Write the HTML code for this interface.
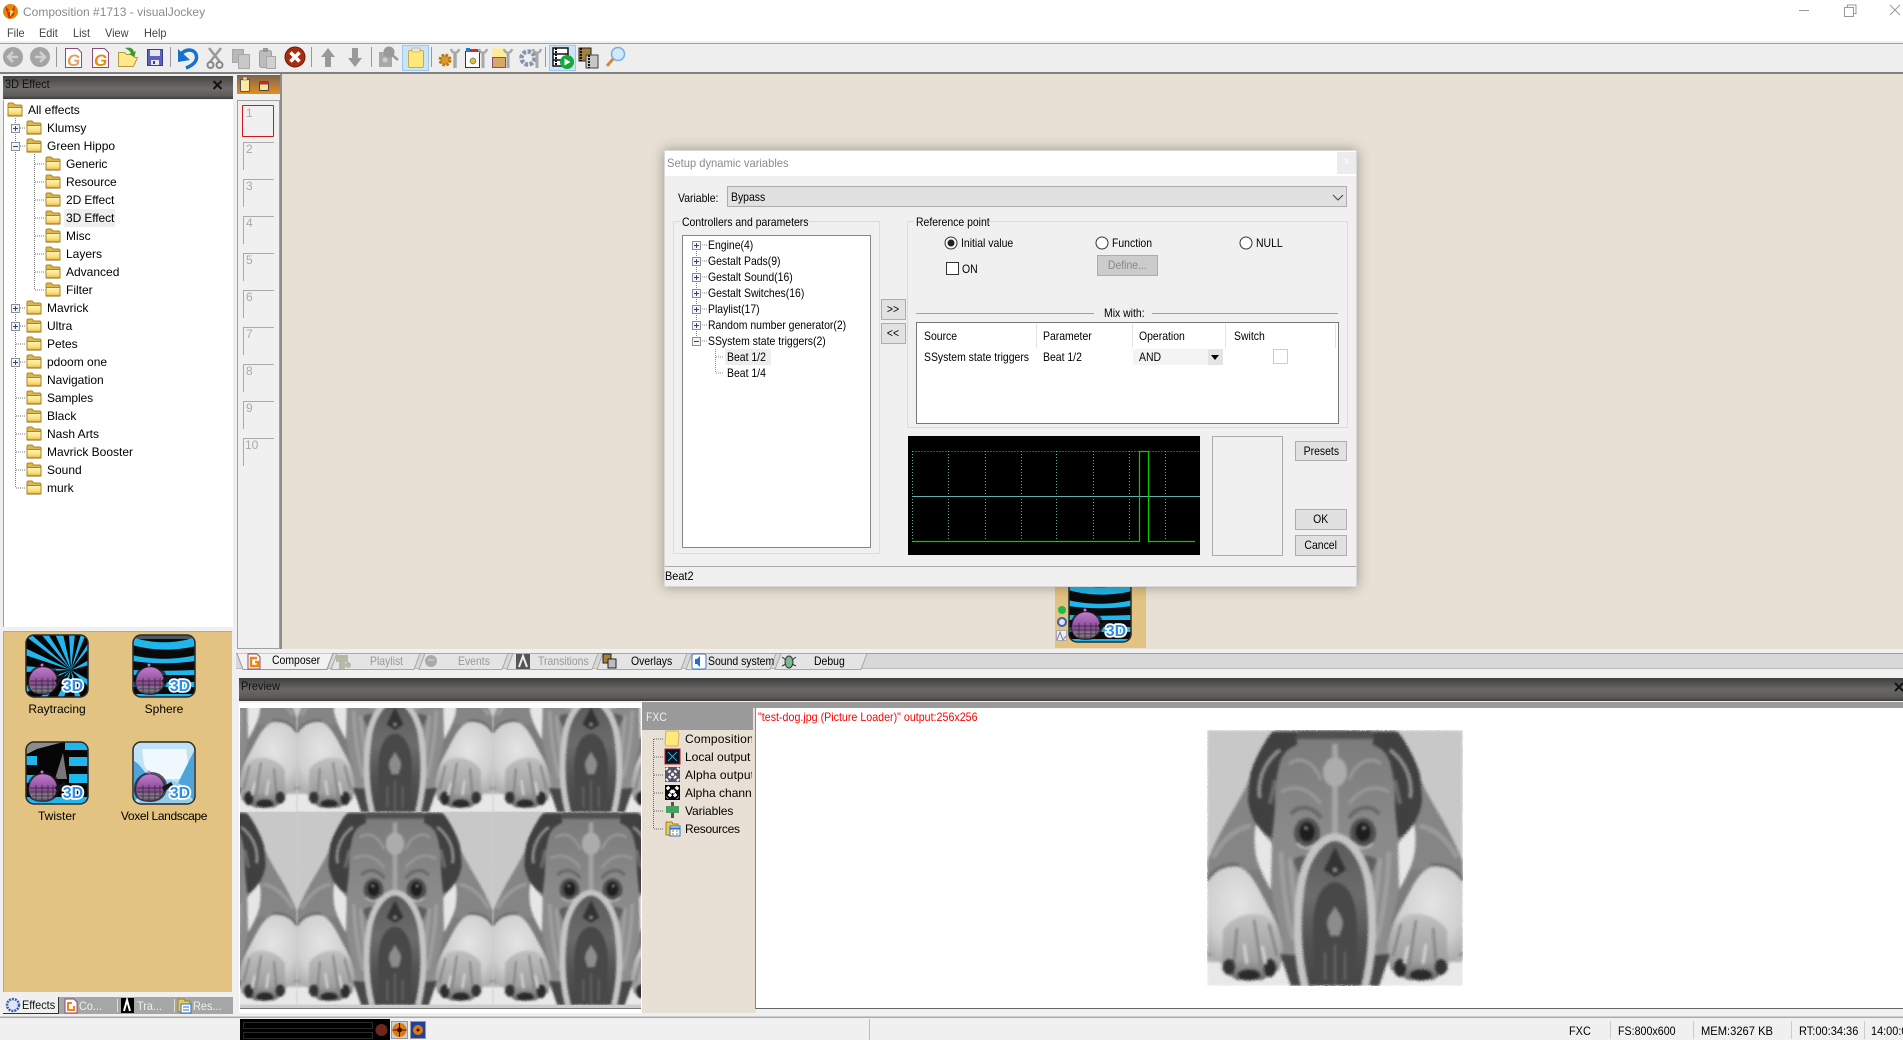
<!DOCTYPE html>
<html><head><meta charset="utf-8"><title>Composition #1713 - visualJockey</title>
<style>
html,body{margin:0;padding:0;background:#f0f0f0;width:1903px;height:1040px;overflow:hidden}
#p{position:relative;width:1903px;height:1040px;overflow:hidden;font:12px/16px "Liberation Sans",sans-serif;color:#000}
.a,.t,svg.a{position:absolute}
.t{white-space:nowrap;font:12px/16px "Liberation Sans",sans-serif}
.g{color:#8a8a8a}
.n{transform:scaleX(.87);transform-origin:0 50%}
.s{transform:scaleX(.91);transform-origin:0 50%}
.btn{position:absolute;background:#e1e1e1;border:1px solid #adadad;box-sizing:border-box;text-align:center;line-height:18px;font-size:12px}
.btn span{display:inline-block;transform:scaleX(.87)}
</style></head><body><div id="p">
<svg width="0" height="0" style="position:absolute"><defs>
<linearGradient id="fg" x1="0" y1="0" x2="0" y2="1"><stop offset="0" stop-color="#fff6bc"/><stop offset=".6" stop-color="#fbdf7e"/><stop offset="1" stop-color="#e8b840"/></linearGradient>
<symbol id="fo" viewBox="0 0 16 15"><path d="M1 13.500V2.500Q1 1 2.500 1h3.500l2 2h5.500Q15 3 15 4.500v9z" fill="#e0b848" stroke="#a8852a"/><path d="M1 14V5.500h14V14z" fill="url(#fg)" stroke="#a8852a"/><path d="M1.500 14h13" stroke="#8a6a18"/></symbol>
<symbol id="pl" viewBox="0 0 9 9"><rect x=".5" y=".5" width="8" height="8" fill="#f4f4f4" stroke="#8a9098"/><path d="M2 4.500h5M4.500 2v5" stroke="#234a8a"/></symbol>
<symbol id="mi" viewBox="0 0 9 9"><rect x=".5" y=".5" width="8" height="8" fill="#f4f4f4" stroke="#8a9098"/><path d="M2 4.500h5" stroke="#234a8a"/></symbol>
<clipPath id="ic"><rect x="1" y="1" width="62" height="62" rx="8"/></clipPath>
<linearGradient id="hg" x1="0" y1="0" x2="0" y2="1"><stop offset="0" stop-color="#c07ccc"/><stop offset=".6" stop-color="#8a4a96"/><stop offset=".85" stop-color="#8d7f92"/><stop offset="1" stop-color="#444"/></linearGradient>
<g id="hb"><path d="M2 50C1 38 10 31 19 31s16 6 16 15c0 9-7 15-16 15S3 59 2 50z" fill="#111" opacity=".7"/><path d="M4 50C3 40 10 33 18 33s14 6 14 14-6 13-14 13S5 58 4 50z" fill="url(#hg)" stroke="#3a2040" stroke-width=".6"/><path d="M5 47h27M5 51h26M7 55h22M11 44v15M17 44v16M23 44v15M28 44v13" stroke="#2a2a2a" stroke-width=".7" fill="none"/><path d="M30 46l9-5 2 3-9 7z" fill="#161616"/><circle cx="17" cy="31" r="1.500" fill="#d070e0"/><text x="48" y="57" text-anchor="middle" font-family="Liberation Sans" font-weight="bold" font-size="16" fill="#2b8fe6" stroke="#fff" stroke-width="3.500" paint-order="stroke" stroke-linejoin="round">3D</text><rect x="1" y="1" width="62" height="62" rx="8" fill="none" stroke="#2a2a2a" stroke-width="1.500"/></g>
<symbol id="ray" viewBox="0 0 64 64"><g clip-path="url(#ic)"><rect width="64" height="64" fill="#050505"/><path d="M46 36L0 2h8zM46 36L16 0h7zM46 36L30 0h8zM46 36L44 0h6zM46 36L56 0h5zM46 36L64 8v6zM46 36L64 26v5zM46 36L0 14v7zM46 36L0 32v6zM46 36L64 46v7zM46 36L50 64h6zM46 36L32 64h7zM46 36L14 64h7zM46 36L0 52v7z" fill="#22b6ec"/></g><use href="#hb"/></symbol>
<symbol id="sph" viewBox="0 0 64 64"><g clip-path="url(#ic)"><rect width="64" height="64" fill="#0a0a0a"/><path d="M0 3C20 10 44 10 64 3v9C44 17 20 17 0 11zM0 21C20 26 44 26 64 21v6C44 30 20 30 0 27zM0 36C20 37 44 37 64 36v5H0zM0 48h64v5H0zM0 60h64v4H0z" fill="#1fb6ec"/><rect x="0" y="0" width="64" height="5" fill="#8ab" opacity=".5"/></g><use href="#hb"/></symbol>
<symbol id="twi" viewBox="0 0 64 64"><g clip-path="url(#ic)"><rect width="64" height="64" fill="#060606"/><path d="M40 0h24v9H40zM44 16h20v9H44zM44 33h20v9H44zM0 15h12v9H0zM0 34h12v8H0z" fill="#1fb6ec"/><path d="M0 0h42L12 8 0 14z" fill="#8c8c8c"/><path d="M38 12l4 26H30z" fill="#777"/><path d="M0 56h64v8H0z" fill="#1fb6ec"/></g><use href="#hb"/></symbol>
<symbol id="vox" viewBox="0 0 64 64"><g clip-path="url(#ic)"><rect width="64" height="64" fill="#bfe2f5"/><path d="M10 8h44l2 14-8 16H20L12 24z" fill="#eef8fd"/><path d="M2 20c8 4 14 18 22 24L2 60zM62 10L46 42l16 18z" fill="#4ea4d8"/><path d="M22 44c8-6 18-6 28 0l12 20H4z" fill="#93cdec"/></g><use href="#hb"/></symbol>
<radialGradient id="arm" cx=".42" cy=".38" r=".75"><stop offset="0" stop-color="#e4e4e4"/><stop offset=".55" stop-color="#d0d0d0"/><stop offset="1" stop-color="#9a9a9a"/></radialGradient>
<linearGradient id="fc" x1="0" y1="0" x2="0" y2="1"><stop offset="0" stop-color="#7a7a7a"/><stop offset=".4" stop-color="#8a8a8a"/><stop offset="1" stop-color="#8e8e8e"/></linearGradient>
<linearGradient id="pw" x1="0" y1="0" x2="0" y2="1"><stop offset="0" stop-color="#c0c0c0"/><stop offset=".7" stop-color="#a0a0a0"/><stop offset="1" stop-color="#666"/></linearGradient>
<linearGradient id="mz" x1="0" y1="0" x2="0" y2="1"><stop offset="0" stop-color="#5a5a5a"/><stop offset=".4" stop-color="#6c6c6c"/><stop offset=".7" stop-color="#525252"/><stop offset="1" stop-color="#454545"/></linearGradient>
<filter id="fur" x="0" y="0" width="1" height="1" color-interpolation-filters="sRGB"><feGaussianBlur in="SourceGraphic" stdDeviation="1.300" result="b"/><feTurbulence type="fractalNoise" baseFrequency=".9" numOctaves="2" seed="4" result="n"/><feDisplacementMap in="b" in2="n" scale="3" xChannelSelector="R" yChannelSelector="G"/></filter>
<g id="dh">
<path d="M0 132C5 120 14 100 24 84 32 70 38 60 42 50L48 92 62 110 64 140 40 140 14 138 0 152z" fill="#858585"/>
<path d="M6 128C14 112 28 98 44 96" stroke="#9a9a9a" stroke-width="5" fill="none"/>
<path d="M0 152C6 142 14 136 28 136 44 138 52 160 62 178 70 192 76 206 76 226L73 232 16 235 0 222z" fill="url(#arm)"/>
<path d="M0 150C8 138 18 134 32 135" stroke="#666" stroke-width="3" fill="none"/>
<path d="M49 94C56 104 62 108 65 114L64 160C58 150 52 138 49 126 47 114 47 102 49 94z" fill="#e6e6e6"/>
<path d="M16 200C24 188 42 180 58 186 68 194 76 210 76 226L72 240 55 250 30 250 15 240z" fill="url(#pw)"/>
<path d="M30 198L27 232M47 190L54 236M62 194L70 226" stroke="#7a7a7a" stroke-width="2" fill="none"/>
<ellipse cx="22" cy="237" rx="6" ry="8" fill="#333"/><ellipse cx="42" cy="245" rx="11" ry="5.500" fill="#2a2a2a"/><ellipse cx="63" cy="238" rx="6" ry="9" fill="#2c2c2c"/>
<path d="M37 214l3 20M55 216l4 18" stroke="#d4d4d4" stroke-width="3"/>
<path d="M128 0H70C68 30 66 60 66 80L65 110V165C68 180 72 192 75 205L76 232 84 256H128z" fill="url(#fc)"/>
<path d="M65 2H90V15C80 18 74 26 72 36 69 48 68 60 68 72 68 84 66 96 65 108L58 104 48 92C44 84 41 76 41 68L43 45C47 30 56 14 65 2z" fill="#404040"/>
<path d="M73 20C62 28 55 40 53 52 52 58 52 64 53 68" stroke="#8c8c8c" stroke-width="4" fill="none"/><path d="M68 50L63 74" stroke="#6c6c6c" stroke-width="4"/>
<path d="M92 0h36v9H88z" fill="#505050"/>
<path d="M82 34C92 26 106 30 114 50M74 62C88 54 102 58 114 74" stroke="#9a9a9a" stroke-width="3" fill="none"/>
<path d="M84 84C92 74 106 76 114 88" stroke="#686868" stroke-width="4" fill="none"/>
<ellipse cx="100" cy="103" rx="13" ry="15" fill="#505050"/><ellipse cx="100" cy="102" rx="7.500" ry="9.500" fill="#1e1e1e"/><circle cx="99" cy="98" r="1.800" fill="#999"/>
<path d="M90 113Q100 123 110 112" stroke="#c4c4c4" stroke-width="2.200" fill="none"/>
<path d="M74 122C75 150 79 180 86 210M83 128C85 150 87 170 90 192" stroke="#9e9e9e" stroke-width="5" fill="none"/>
<path d="M104 128C100 132 96 140 94 150L86 130C90 126 98 124 104 128z" fill="#5e5e5e"/>
<path d="M73 224L98 226 104 256H84z" fill="#484848"/>
</g>
<g id="dog" filter="url(#fur)">
<rect width="256" height="256" fill="#c8c8c8"/>
<rect y="226" width="256" height="6" fill="#b2b2b2"/><rect y="232" width="256" height="24" fill="#e8e8e8"/>
<path d="M0 132C14 104 32 76 42 50L60 8 68 0H188L196 8 214 50C224 76 242 104 256 132V226H0z" fill="#7c7c7c"/>
<use href="#dh"/><use href="#dh" transform="translate(256 0) scale(-1 1)"/>
<path d="M128 14V105" stroke="#a4a4a4" stroke-width="6"/><ellipse cx="128" cy="42" rx="12" ry="15" fill="#acacac"/>
<path d="M128 107C110 108 96 130 92 155 87 190 88 225 96 256H160C168 225 169 190 164 155 160 130 146 108 128 107z" fill="url(#mz)"/>
<path d="M128 107C112 108 98 130 94 155 89 190 90 225 98 256M128 107C144 108 158 130 162 155 167 190 166 225 158 256" stroke="#c4c4c4" stroke-width="8" fill="none"/>
<path d="M128 152C110 154 106 180 106 200L108 256H148L150 200C150 180 146 154 128 152z" fill="#484848"/>
<path d="M128 117L117 140 128 147 139 140z" fill="#333"/><circle cx="128" cy="140" r="2.500" fill="#8a8a8a"/>
<path d="M128 176C131 182 136 187 136 193 136 198 133 201 133 206H123C123 201 120 198 120 193 120 187 125 182 128 176z" fill="#8c8c8c"/>
<path d="M118 222V250M128 214V254M138 222V250" stroke="#6a6a6a" stroke-width="2"/>
</g>
</defs></svg>

<!-- title bar -->
<div class="a" style="left:0;top:0;width:1903px;height:42px;background:#fff"></div>
<svg class="a" style="left:2px;top:3px" width="17" height="17" viewBox="0 0 17 17"><circle cx="8.500" cy="8.500" r="7.500" fill="#e8860c"/><path d="M3 3l4 4-2 3 5-3 3-5-1 10-5 4z" fill="#d82a10"/><path d="M8 7l4 1-4 6z" fill="#ffe14a"/></svg>
<div class="t g" style="left:23px;top:4px">Composition #1713 - visualJockey</div>
<div class="t s" style="left:7px;top:25px;color:#444">File</div><div class="t s" style="left:39px;top:25px;color:#444">Edit</div><div class="t s" style="left:73px;top:25px;color:#444">List</div><div class="t s" style="left:105px;top:25px;color:#444">View</div><div class="t s" style="left:144px;top:25px;color:#444">Help</div>
<svg class="a" style="left:1790px;top:0" width="113" height="20"><path d="M9 10.500h10" stroke="#999"/><path d="M54.500 7.500h9v9h-9zM57.500 7.500v-2.500h8.500v8.500h-2.500" fill="none" stroke="#999"/><path d="M100 5l10 10M110 5l-10 10" stroke="#999"/></svg>

<!-- toolbar -->
<div class="a" style="left:0;top:41px;width:1903px;height:2px;background:#f0f0f0"></div>
<div class="a" style="left:0;top:43px;width:1903px;height:1px;background:#a0a0a0"></div>
<div class="a" style="left:0;top:44px;width:1903px;height:28px;background:#eee"></div>
<div class="a" style="left:0;top:72px;width:1903px;height:2px;background:#808080"></div>
<svg class="a" style="left:0;top:0" width="640" height="76">
<path d="M56.500 47v20M170.500 47v20M311.500 47v20M371.500 47v20M431.500 47v20M545.500 47v20" stroke="#999"/>
<rect x="402.500" y="45.500" width="26" height="25" fill="#cce4f7" stroke="#99c9ef"/><rect x="549.500" y="45.500" width="26" height="25" fill="#cce4f7" stroke="#99c9ef"/>
<circle cx="13" cy="57" r="10" fill="#a4a4a4"/><path d="M18 57H9M13 52l-5 5 5 5" stroke="#d0d0d0" stroke-width="2.500" fill="none"/>
<circle cx="40" cy="57" r="10" fill="#a4a4a4"/><path d="M35 57h9M40 52l5 5-5 5" stroke="#d0d0d0" stroke-width="2.500" fill="none"/>
<path d="M65.500 48.500h12l4 4v15h-16z" fill="#fff" stroke="#8a4a7a"/><text x="67" y="66" font-family="Liberation Sans" font-weight="bold" font-style="italic" font-size="17" fill="#e0a060">G</text>
<path d="M92.500 48.500h12l4 4v15h-16z" fill="#fff" stroke="#8a4a7a"/><text x="94" y="66" font-family="Liberation Sans" font-weight="bold" font-style="italic" font-size="17" fill="#f0860c">G</text>
<path d="M118.500 66.500V52.500h6l2 2h8v3h3l-4 9z" fill="#ffe98c" stroke="#b89a38"/><path d="M125 48c5-1 8 0 9 4l2-1-2 6-5-3 2-1c-1-2-3-3-6-5z" fill="#3a9a30"/>
<rect x="147.500" y="49.500" width="15" height="16" fill="#5a62c0" stroke="#3a3f90"/><rect x="150" y="50" width="10" height="6" fill="#e6e6f2"/><rect x="151" y="60" width="8" height="5" fill="#e8e8e8"/><rect x="153" y="61" width="2" height="3" fill="#3a3f90"/>
<path d="M181 54C188 47 197 50 196.500 58 196 63 191 66 186 68" stroke="#1570d0" stroke-width="3.500" fill="none"/><path d="M178 49v13l12-2z" fill="#1570d0"/>
<path d="M209 48l11 14M221 48l-11 14" stroke="#999" stroke-width="2.500"/><circle cx="210.500" cy="65" r="3" fill="none" stroke="#888" stroke-width="2"/><circle cx="219.500" cy="65" r="3" fill="none" stroke="#888" stroke-width="2"/>
<rect x="232.500" y="49.500" width="11" height="13" fill="#b8b8b8" stroke="#a8a8a8"/><rect x="238.500" y="54.500" width="11" height="14" fill="#c8c8c8" stroke="#a8a8a8"/>
<rect x="259.500" y="50.500" width="12" height="17" rx="2" fill="#bcbcbc" stroke="#a0a0a0"/><rect x="263" y="48" width="5" height="4" fill="#999"/><rect x="266.500" y="56.500" width="9" height="12" fill="#d0d0d0" stroke="#a8a8a8"/>
<circle cx="295" cy="57" r="10" fill="#a82c12" stroke="#6e1a08"/><path d="M290.500 52.500l9 9M299.500 52.500l-9 9" stroke="#fff" stroke-width="3.500"/>
<path d="M328 48l-7 9h4v10h6V57h4z" fill="#999"/><path d="M355 67l-7-9h4V48h6v10h4z" fill="#999"/>
<rect x="379" y="52" width="13" height="15" fill="#a8a8a8"/><circle cx="389" cy="52" r="5.500" fill="#999"/><path d="M391 54l7 6" stroke="#999" stroke-width="2.500"/><circle cx="385" cy="60" r="2.500" fill="#ccc"/>
<rect x="408.500" y="50.500" width="15" height="17" rx="1.500" fill="#ffe97a" stroke="#c9a94f"/><rect x="412" y="48" width="8" height="4" fill="#e8e8e0" stroke="#a89860" stroke-width=".5"/>
<circle cx="445" cy="60" r="5" fill="#d89a30" stroke="#b87818" stroke-width="3" stroke-dasharray="2.500 1.500"/><path d="M455 52v16" stroke="#a8a8a8" stroke-width="3.500"/><path d="M451 49c1 5 7 5 8 0" stroke="#a8a8a8" stroke-width="2.500" fill="none"/>
<rect x="465.500" y="51.500" width="14" height="16" fill="#fff" stroke="#333"/><rect x="466" y="48" width="4" height="4" fill="#1080e0"/><rect x="470" y="49" width="8" height="3" fill="#d82a20"/><circle cx="473" cy="61" r="3" fill="#e0c040" stroke="#333" stroke-width=".5"/><path d="M483 52v16" stroke="#a8a8a8" stroke-width="3"/><path d="M479 49c1 5 7 5 8 0" stroke="#a8a8a8" stroke-width="2.500" fill="none"/>
<rect x="492.500" y="48.500" width="13" height="10" fill="#ffeb90"/><rect x="492.500" y="57.500" width="13" height="10" fill="#d8a868" stroke="#8a4a7a"/><path d="M508 52v16" stroke="#a8a8a8" stroke-width="3"/><path d="M504 49c1 5 7 5 8 0" stroke="#a8a8a8" stroke-width="2.500" fill="none"/>
<circle cx="528" cy="58" r="6.500" fill="none" stroke="#8a94b0" stroke-width="4.500" stroke-dasharray="3.500 1.500"/><path d="M537 52v16" stroke="#a8a8a8" stroke-width="3"/><path d="M533 49c1 5 7 5 8 0" stroke="#a8a8a8" stroke-width="2.500" fill="none"/>
<rect x="553" y="48" width="15" height="18" fill="#fff" stroke="#111" stroke-width="1.500"/><path d="M553 54h15M553 60h15" stroke="#111" stroke-width="1.500"/><path d="M556 48v18" stroke="#111" stroke-width="2" stroke-dasharray="2 1"/><circle cx="567" cy="62" r="7" fill="#17a838"/><path d="M564.500 58.500v7l6-3.500z" fill="#fff"/>
<rect x="579" y="48" width="12" height="13" fill="#a8803c" stroke="#222"/><rect x="586" y="55" width="12" height="13" fill="#c4c8c8" stroke="#444"/><path d="M581 48v13M589 55v13" stroke="#111" stroke-dasharray="2 1" stroke-width="2"/>
<circle cx="618" cy="54" r="6.500" fill="#cfe8fa" stroke="#7aaed8" stroke-width="1.500"/><path d="M613 59l-6 7" stroke="#d08a40" stroke-width="3"/>
</svg>

<!-- main background -->
<div class="a" style="left:282px;top:74px;width:1621px;height:575px;background:#e8e0d4"></div>

<!-- left panel -->
<div class="a" style="left:3px;top:76px;width:230px;height:23px;background:linear-gradient(#464442,#6e6c68 55%,#5e5c59 85%,#403e3c)"></div>
<div class="t s" style="left:5px;top:76px;color:#111">3D Effect</div>
<svg class="a" style="left:212px;top:80px" width="11" height="10"><path d="M1.500 1l8 8M9.500 1l-8 8" stroke="#111" stroke-width="2"/></svg>
<div class="a" style="left:3px;top:100px;width:230px;height:527px;background:#fff;border-left:1px solid #a0a0a0;box-sizing:border-box"></div>
<div class="a" style="left:64px;top:209px;width:51px;height:18px;background:#eee"></div>
<svg class="a" style="left:0;top:100px" width="233" height="410">
<path d="M15.500 18V388M34.500 54V190M35 64h10M35 82h10M35 100h10M35 118h10M35 136h10M35 154h10M35 172h10M35 190h10M16 244h10M16 298h10M16 316h10M16 334h10M16 352h10M16 370h10M16 388h10" stroke="#777" fill="none" stroke-dasharray="1 1"/>
<path d="M20 28h6M20 46h6M20 208h6M20 226h6M20 262h6" stroke="#777" stroke-dasharray="1 1"/>
<use href="#fo" x="7" y="2" width="16" height="15"/>
<use href="#fo" x="26" y="20" width="16" height="15"/><use href="#fo" x="26" y="38" width="16" height="15"/>
<use href="#fo" x="45" y="56" width="16" height="15"/><use href="#fo" x="45" y="74" width="16" height="15"/><use href="#fo" x="45" y="92" width="16" height="15"/><use href="#fo" x="45" y="110" width="16" height="15"/><use href="#fo" x="45" y="128" width="16" height="15"/><use href="#fo" x="45" y="146" width="16" height="15"/><use href="#fo" x="45" y="164" width="16" height="15"/><use href="#fo" x="45" y="182" width="16" height="15"/>
<use href="#fo" x="26" y="200" width="16" height="15"/><use href="#fo" x="26" y="218" width="16" height="15"/><use href="#fo" x="26" y="236" width="16" height="15"/><use href="#fo" x="26" y="254" width="16" height="15"/><use href="#fo" x="26" y="272" width="16" height="15"/><use href="#fo" x="26" y="290" width="16" height="15"/><use href="#fo" x="26" y="308" width="16" height="15"/><use href="#fo" x="26" y="326" width="16" height="15"/><use href="#fo" x="26" y="344" width="16" height="15"/><use href="#fo" x="26" y="362" width="16" height="15"/><use href="#fo" x="26" y="380" width="16" height="15"/>
<use href="#pl" x="11" y="24" width="9" height="9"/><use href="#mi" x="11" y="42" width="9" height="9"/><use href="#pl" x="11" y="204" width="9" height="9"/><use href="#pl" x="11" y="222" width="9" height="9"/><use href="#pl" x="11" y="258" width="9" height="9"/>
</svg>
<div class="t" style="left:28px;top:102px">All effects</div>
<div class="t" style="left:47px;top:120px">Klumsy</div>
<div class="t" style="left:47px;top:138px">Green Hippo</div>
<div class="t" style="left:66px;top:156px;letter-spacing:-.1px">Generic</div>
<div class="t" style="left:66px;top:174px;letter-spacing:-.1px">Resource</div>
<div class="t" style="left:66px;top:192px;letter-spacing:-.1px">2D Effect</div>
<div class="t" style="left:66px;top:210px;letter-spacing:-.1px">3D Effect</div>
<div class="t" style="left:66px;top:228px">Misc</div>
<div class="t" style="left:66px;top:246px">Layers</div>
<div class="t" style="left:66px;top:264px">Advanced</div>
<div class="t" style="left:66px;top:282px">Filter</div>
<div class="t" style="left:47px;top:300px">Mavrick</div>
<div class="t" style="left:47px;top:318px">Ultra</div>
<div class="t" style="left:47px;top:336px">Petes</div>
<div class="t" style="left:47px;top:354px">pdoom one</div>
<div class="t" style="left:47px;top:372px">Navigation</div>
<div class="t" style="left:47px;top:390px;letter-spacing:-.1px">Samples</div>
<div class="t" style="left:47px;top:408px">Black</div>
<div class="t" style="left:47px;top:426px">Nash Arts</div>
<div class="t" style="left:47px;top:444px">Mavrick Booster</div>
<div class="t" style="left:47px;top:462px">Sound</div>
<div class="t" style="left:47px;top:480px">murk</div>

<!-- gold panel -->
<div class="a" style="left:3px;top:631px;width:229px;height:361px;background:#e2c382;border:1px solid #aaa;border-width:1px 0 0 1px;box-sizing:border-box"></div>
<svg class="a" style="left:25px;top:634px" width="64" height="64"><use href="#ray" width="64" height="64"/></svg>
<svg class="a" style="left:132px;top:634px" width="64" height="64"><use href="#sph" width="64" height="64"/></svg>
<svg class="a" style="left:25px;top:741px" width="64" height="64"><use href="#twi" width="64" height="64"/></svg>
<svg class="a" style="left:132px;top:741px" width="64" height="64"><use href="#vox" width="64" height="64"/></svg>
<div class="t" style="left:0;width:114px;text-align:center;top:701px">Raytracing</div>
<div class="t" style="left:107px;width:114px;text-align:center;top:701px">Sphere</div>
<div class="t" style="left:0;width:114px;text-align:center;top:808px">Twister</div>
<div class="t" style="left:107px;width:114px;text-align:center;top:808px;letter-spacing:-.35px">Voxel Landscape</div>
<!-- left bottom tabs -->
<div class="a" style="left:3px;top:997px;width:230px;height:17px;background:#a6a6a6"></div>
<div class="a" style="left:3px;top:997px;width:56px;height:17px;background:#f0f0f0;border-right:1px solid #333;border-bottom:1px solid #333;box-sizing:border-box"></div>
<svg class="a" style="left:0;top:996px" width="236" height="18">
<circle cx="13" cy="9" r="6" fill="#dfe6f8" stroke="#3f5db0" stroke-width="2.500" stroke-dasharray="2 1"/>
<path d="M65 3h9l3 3v11H65z" fill="#fff" stroke="#8a4a7a"/><path d="M72 7h-4v7h6v-4" stroke="#f0860c" stroke-width="2" fill="none"/>
<path d="M117.500 3v13M174.500 3v13" stroke="#ddd"/><rect x="121" y="2" width="13" height="15" fill="#000"/><path d="M124 15l3-11 3 11" stroke="#fff" stroke-width="2" fill="none"/>
<path d="M178 3h6l1 2h5v11h-12z" fill="#e8c860" stroke="#a08020"/><rect x="181" y="8" width="10" height="9" fill="#fff" stroke="#2a70c0"/><path d="M183 11h6M183 14h6" stroke="#2a70c0"/>
</svg>
<div class="t s" style="left:22px;top:997px;color:#111">Effects</div>
<div class="t s" style="left:79px;top:998px;color:#eee">Co...</div>
<div class="t s" style="left:137px;top:998px;color:#eee">Tra...</div>
<div class="t s" style="left:193px;top:998px;color:#eee">Res...</div>

<!-- column 2 -->
<div class="a" style="left:237px;top:75px;width:43px;height:19px;background:linear-gradient(#806248,#a87840 45%,#e88c18)"></div>
<svg class="a" style="left:237px;top:75px" width="43" height="19"><rect x="3.500" y="4.500" width="9" height="12" rx="1" fill="#fbe9a0" stroke="#555"/><rect x="6" y="2" width="4" height="3" fill="#ddd" stroke="#555" stroke-width=".5"/><rect x="22.500" y="6.500" width="9" height="9" rx="1" fill="#f5e3a0" stroke="#444"/><rect x="22.500" y="6.500" width="9" height="3" fill="#c03020"/></svg>
<div class="a" style="left:237px;top:100px;width:43px;height:549px;background:#f0f0f0;border:1px solid #a0a0a0;border-top-width:1px;box-sizing:border-box"></div>
<div class="a" style="left:280px;top:74px;width:2px;height:575px;background:#8c8c8c"></div>
<div class="a" style="left:242px;top:105px;width:32px;height:32px;box-sizing:border-box;border:1px solid #d01818;border-radius:1px"></div>
<svg class="a" style="left:240px;top:140px" width="36" height="370"><path d="M3.500 30V2.500H34M3.500 67V39.500H34M3.500 104V76.500H34M3.500 141V113.500H34M3.500 178V150.500H34M3.500 215V187.500H34M3.500 252V224.500H34M3.500 289V261.500H34M3.500 326V298.500H34" stroke="#aaa" fill="none"/></svg>
<div class="t g" style="left:246px;top:105px;color:#aaa">1</div>
<div class="t" style="left:246px;top:141px;color:#aaa">2</div><div class="t" style="left:246px;top:178px;color:#aaa">3</div><div class="t" style="left:246px;top:215px;color:#aaa">4</div><div class="t" style="left:246px;top:252px;color:#aaa">5</div><div class="t" style="left:246px;top:289px;color:#aaa">6</div><div class="t" style="left:246px;top:326px;color:#aaa">7</div><div class="t" style="left:246px;top:363px;color:#aaa">8</div><div class="t" style="left:246px;top:400px;color:#aaa">9</div><div class="t" style="left:245px;top:437px;color:#aaa">10</div>

<!-- effect card -->
<div class="a" style="left:1055px;top:570px;width:91px;height:78px;background:#e2c382"></div>
<svg class="a" style="left:1068px;top:579px" width="64" height="64"><use href="#sph" width="64" height="64"/></svg>
<svg class="a" style="left:1055px;top:600px" width="13" height="46"><circle cx="7" cy="10" r="4" fill="#21b84a"/><circle cx="7" cy="22" r="4" fill="#dfe6f8" stroke="#3f5db0" stroke-width="2"/><rect x="1.500" y="30.500" width="10" height="10" fill="#eee" stroke="#aaa"/><path d="M2 40l3-8 3 8 3-4" stroke="#77a" fill="none"/></svg>

<!-- composer tabs -->
<div class="a" style="left:236px;top:649px;width:1667px;height:4px;background:#f0f0f0"></div>
<div class="a" style="left:236px;top:653px;width:1667px;height:16px;background:#d8d8d8;border-top:1px solid #a0a0a0;border-bottom:1px solid #bbb;box-sizing:border-box"></div>
<svg class="a" style="left:236px;top:652px" width="640" height="19">
<path d="M95 17.500L101 1.500H184L178 17.500z" fill="#e4e4e4" stroke="#a8a8a8"/><path d="M183 17.500L189 1.500H272L266 17.500z" fill="#e4e4e4" stroke="#a8a8a8"/><path d="M271 17.500L277 1.500H362L356 17.500z" fill="#e4e4e4" stroke="#a8a8a8"/><path d="M361 17.500L367 1.500H451L445 17.500z" fill="#e4e4e4" stroke="#a8a8a8"/><path d="M450 17.500L456 1.500H540L534 17.500z" fill="#e4e4e4" stroke="#a8a8a8"/><path d="M539 17.500L545 1.500H631L625 17.500z" fill="#e4e4e4" stroke="#a8a8a8"/>
<path d="M1 1.500L7 17.500H90L96 1.500z" fill="#f2f2f2" stroke="none"/><path d="M1 1.500L7 17.500H91L97 1.500" fill="none" stroke="#999"/>
<path d="M12 2h9l3 3v12H12z" fill="#fff" stroke="#8a4a7a"/><path d="M21 6h-6v8h7v-4h-3" stroke="#f0860c" stroke-width="2.500" fill="none"/>
<path d="M100 3h12v7h-3v7h-6v-7h-3z" fill="#b8b8a8"/><circle cx="112" cy="13" r="3" fill="#b8b8a8"/>
<circle cx="195" cy="9" r="6" fill="#aaa"/><path d="M192 8h6" stroke="#ddd"/>
<rect x="280" y="2" width="14" height="15" fill="#555"/><path d="M283 15l4-11 4 11" stroke="#eee" stroke-width="2" fill="none"/>
<rect x="367" y="2" width="8" height="9" fill="#a8803c" stroke="#222"/><rect x="372" y="7" width="8" height="9" fill="#bbb" stroke="#222"/>
<rect x="456" y="2" width="14" height="15" rx="2" fill="#fff" stroke="#4a70c0"/><path d="M459 7h2l3-3v11l-3-3h-2z" fill="#2070d0"/>
<ellipse cx="553" cy="10" rx="4" ry="6" fill="#7cb890" stroke="#333"/><path d="M546 5l4 3M560 5l-4 3M546 14l4-2M560 14l-4-2" stroke="#333"/>
</svg>
<div class="t n" style="left:272px;top:652px">Composer</div>
<div class="t n" style="left:370px;top:653px;color:#999">Playlist</div>
<div class="t n" style="left:458px;top:653px;color:#999">Events</div>
<div class="t n" style="left:538px;top:653px;color:#999">Transitions</div>
<div class="t n" style="left:631px;top:653px">Overlays</div>
<div class="t n" style="left:708px;top:653px">Sound system</div>
<div class="t n" style="left:814px;top:653px">Debug</div>

<!-- preview header -->
<div class="a" style="left:239px;top:678px;width:1664px;height:23px;background:linear-gradient(#403e3c,#6a6865 50%,#5c5a57 85%,#3c3a38)"></div>
<div class="t s" style="left:241px;top:678px;color:#111">Preview</div>
<svg class="a" style="left:1893px;top:682px" width="10" height="10"><path d="M2 1l8 8M10 1L2 9" stroke="#111" stroke-width="2"/></svg>

<!-- preview image -->
<div class="a" style="left:239px;top:703px;width:403px;height:310px;background:#fff"></div>
<svg class="a" style="left:240px;top:708px;background:#ccc" width="401" height="300" viewBox="240 708 401 300">
<g transform="translate(101 619) scale(.7656 .7539)"><use href="#dog"/></g>
<g transform="translate(297 619) scale(.7656 .7539)"><use href="#dog"/></g>
<g transform="translate(493 619) scale(.7656 .7539)"><use href="#dog"/></g>
<g transform="translate(101 812) scale(.7656 .7539)"><use href="#dog"/></g>
<g transform="translate(297 812) scale(.7656 .7539)"><use href="#dog"/></g>
<g transform="translate(493 812) scale(.7656 .7539)"><use href="#dog"/></g>
</svg>
<div class="a" style="left:240px;top:1008px;width:401px;height:1px;background:#777"></div>

<!-- FXC pane -->
<div class="a" style="left:642px;top:702px;width:114px;height:311px;background:#e8e0d4"></div>
<div class="a" style="left:642px;top:702px;width:1261px;height:6px;background:#9a9a9a"></div>
<div class="a" style="left:642px;top:702px;width:111px;height:28px;background:#9a9a9a"></div>
<div class="t n" style="left:646px;top:709px;color:#f0f0f0">FXC</div>
<svg class="a" style="left:642px;top:730px" width="44" height="108">
<path d="M11.500 9V99M12 9h10M12 27h10M12 45h10M12 63h10M12 81h10M12 99h10" stroke="#666" fill="none" stroke-dasharray="1 1"/>
<path d="M24 1h12l1 3-1 12H24l-1-3z" fill="#ffe97a" stroke="#cbb060"/>
<rect x="23" y="19" width="15" height="15" fill="#06122e" stroke="#c01818"/><path d="M26 22l9 9M35 22l-9 9" stroke="#38b0a0"/>
<rect x="23" y="37" width="15" height="15" fill="#556" /><path d="M24 38l13 13M37 38L24 51" stroke="#fff" stroke-width="3" stroke-dasharray="2 2"/>
<rect x="23" y="55" width="15" height="15" fill="#000"/><path d="M25 57l11 11M36 57L25 68" stroke="#fff" stroke-width="3.500" stroke-dasharray="3 2"/>
<rect x="29" y="72" width="3" height="16" fill="#555"/><rect x="24" y="76" width="13" height="7" fill="#4aa060"/>
<path d="M24 92h6l1 2h5v11H24z" fill="#e8c860" stroke="#a08020"/><rect x="28" y="96" width="10" height="10" fill="#fff" stroke="#2a70c0"/><path d="M28 98.500h10" stroke="#2a70c0" stroke-width="2"/><path d="M30 101h2M34 101h2M30 104h2M34 104h2" stroke="#c06030"/>
</svg>
<div class="a" style="left:685px;top:730px;width:67px;height:108px;overflow:hidden">
<div class="t" style="left:0;top:1px;letter-spacing:.2px">Composition</div><div class="t" style="left:0;top:19px">Local output</div><div class="t" style="left:0;top:37px;letter-spacing:.15px">Alpha output</div><div class="t" style="left:0;top:55px">Alpha channel</div><div class="t" style="left:0;top:73px;letter-spacing:-.1px">Variables</div><div class="t" style="left:0;top:91px;letter-spacing:-.3px">Resources</div>
</div>

<!-- output pane -->
<div class="a" style="left:755px;top:708px;width:1148px;height:301px;background:#fff;border-left:1px solid #888;border-bottom:1px solid #666;box-sizing:border-box"></div>
<div class="t" style="left:758px;top:709px;color:#f00;transform:scaleX(.89);transform-origin:0 50%">"test-dog.jpg (Picture Loader)" output:256x256</div>
<svg class="a" style="left:1207px;top:730px" width="256" height="256" viewBox="0 0 256 256"><use href="#dog"/></svg>

<!-- status bar -->
<div class="a" style="left:0;top:1016px;width:1903px;height:1px;background:#ccc"></div>
<div class="a" style="left:0;top:1017px;width:1903px;height:1px;background:#aaa"></div>
<div class="a" style="left:240px;top:1019px;width:150px;height:21px;background:#000"></div>
<div class="a" style="left:243px;top:1022px;width:130px;height:7px;border:1px solid #2a2a2a;box-sizing:border-box"></div>
<div class="a" style="left:243px;top:1032px;width:130px;height:7px;border:1px solid #2a2a2a;box-sizing:border-box"></div>
<svg class="a" style="left:374px;top:1019px" width="60" height="21"><circle cx="7.500" cy="11" r="6" fill="#70261c"/><rect x="17.500" y="2.500" width="16" height="17" fill="#ccc" stroke="#999"/><circle cx="25.500" cy="11" r="7" fill="#e07810"/><circle cx="25.500" cy="11" r="2.500" fill="#301000"/><path d="M25.500 4v14M18.500 11h14" stroke="#301000"/><rect x="36.500" y="2.500" width="15" height="17" fill="#2040a0" stroke="#999"/><circle cx="44" cy="11" r="5" fill="#e07810"/><circle cx="44" cy="11" r="1.500" fill="#301000"/></svg>
<div class="a" style="left:869px;top:1019px;width:1px;height:21px;background:#bbb"></div>
<div class="a" style="left:1610px;top:1021px;width:1px;height:18px;background:#ccc"></div>
<div class="a" style="left:1693px;top:1021px;width:1px;height:18px;background:#ccc"></div>
<div class="a" style="left:1791px;top:1021px;width:1px;height:18px;background:#ccc"></div>
<div class="a" style="left:1864px;top:1021px;width:1px;height:18px;background:#ccc"></div>
<div class="t s" style="left:1569px;top:1023px">FXC</div>
<div class="t" style="left:1618px;top:1023px;transform:scaleX(.89);transform-origin:0 50%">FS:800x600</div>
<div class="t" style="left:1701px;top:1023px;transform:scaleX(.93);transform-origin:0 50%">MEM:3267 KB</div>
<div class="t" style="left:1799px;top:1023px;transform:scaleX(.92);transform-origin:0 50%">RT:00:34:36</div>
<div class="t s" style="left:1871px;top:1023px">14:00:06</div>

<!-- dialog -->
<div class="a" style="left:664px;top:150px;width:693px;height:437px;background:#f0f0f0;box-shadow:0 0 12px rgba(60,50,40,.45);border:1px solid #d8d8d8;box-sizing:border-box"></div>
<div class="a" style="left:665px;top:151px;width:691px;height:25px;background:#fff"></div>
<div class="t g" style="left:667px;top:155px;transform:scaleX(.93);transform-origin:0 50%">Setup dynamic variables</div>
<div class="a" style="left:1337px;top:152px;width:19px;height:22px;background:#ececec;color:#fff;text-align:center;line-height:20px;font-size:10px">x</div>
<div class="t n" style="left:678px;top:190px">Variable:</div>
<div class="a" style="left:727px;top:186px;width:620px;height:21px;background:#e1e1e1;border:1px solid #adadad;box-sizing:border-box"></div>
<div class="t n" style="left:731px;top:189px">Bypass</div>
<svg class="a" style="left:1332px;top:194px" width="12" height="7"><path d="M1 1l5 5 5-5" fill="none" stroke="#444"/></svg>
<!-- groups -->
<div class="a" style="left:673px;top:221px;width:207px;height:333px;border:1px solid #dcdcdc;box-sizing:border-box"></div>
<div class="a" style="left:907px;top:221px;width:441px;height:207px;border:1px solid #dcdcdc;box-sizing:border-box"></div>
<div class="a" style="left:680px;top:216px;width:108px;height:10px;background:#f0f0f0"></div>
<div class="a" style="left:914px;top:216px;width:72px;height:10px;background:#f0f0f0"></div>
<div class="t n" style="left:682px;top:214px">Controllers and parameters</div>
<div class="t n" style="left:916px;top:214px">Reference point</div>
<div class="a" style="left:682px;top:235px;width:189px;height:313px;background:#fff;border:1px solid #82878d;box-sizing:border-box"></div>
<div class="a" style="left:725px;top:349px;width:46px;height:16px;background:#eee"></div>
<svg class="a" style="left:682px;top:235px" width="60" height="145">
<path d="M14.500 10V106M18 10h7M18 26h7M18 42h7M18 58h7M18 74h7M18 90h7M18 106h7M33.500 114V138M34 122h8M34 138h8" stroke="#888" fill="none" stroke-dasharray="1 1"/>
<use href="#pl" x="10" y="6" width="9" height="9"/><use href="#pl" x="10" y="22" width="9" height="9"/><use href="#pl" x="10" y="38" width="9" height="9"/><use href="#pl" x="10" y="54" width="9" height="9"/><use href="#pl" x="10" y="70" width="9" height="9"/><use href="#pl" x="10" y="86" width="9" height="9"/><use href="#mi" x="10" y="102" width="9" height="9"/>
</svg>
<div class="t n" style="left:708px;top:237px">Engine(4)</div>
<div class="t n" style="left:708px;top:253px">Gestalt Pads(9)</div>
<div class="t n" style="left:708px;top:269px">Gestalt Sound(16)</div>
<div class="t n" style="left:708px;top:285px">Gestalt Switches(16)</div>
<div class="t n" style="left:708px;top:301px">Playlist(17)</div>
<div class="t n" style="left:708px;top:317px">Random number generator(2)</div>
<div class="t n" style="left:708px;top:333px">SSystem state triggers(2)</div>
<div class="t n" style="left:727px;top:349px">Beat 1/2</div>
<div class="t n" style="left:727px;top:365px">Beat 1/4</div>
<div class="btn" style="left:881px;top:299px;width:25px;height:21px"><span>&gt;&gt;</span></div>
<div class="btn" style="left:881px;top:323px;width:25px;height:21px"><span>&lt;&lt;</span></div>
<!-- reference point -->
<svg class="a" style="left:940px;top:235px" width="320" height="45">
<circle cx="11" cy="8" r="6" fill="#fff" stroke="#333"/><circle cx="11" cy="8" r="3.500" fill="#222"/>
<circle cx="162" cy="8" r="6" fill="#fff" stroke="#333"/><circle cx="306" cy="8" r="6" fill="#fff" stroke="#333"/>
<rect x="6.500" y="27.500" width="12" height="12" fill="#fff" stroke="#333"/>
</svg>
<div class="t n" style="left:961px;top:235px">Initial value</div>
<div class="t n" style="left:1112px;top:235px">Function</div>
<div class="t n" style="left:1256px;top:235px">NULL</div>
<div class="t n" style="left:962px;top:261px">ON</div>
<div class="btn" style="left:1097px;top:255px;width:61px;height:21px;background:#ccc;color:#888"><span>Define...</span></div>
<div class="a" style="left:916px;top:313px;width:178px;height:1px;background:#a0a0a0"></div>
<div class="a" style="left:1152px;top:313px;width:186px;height:1px;background:#a0a0a0"></div>
<div class="t n" style="left:1104px;top:305px">Mix with:</div>
<div class="a" style="left:916px;top:322px;width:423px;height:102px;background:#fff;border:1px solid #777;box-sizing:border-box"></div>
<svg class="a" style="left:916px;top:322px" width="423" height="50"><path d="M120.500 2v24M216.500 2v24M309.500 2v24M419.500 2v24" stroke="#e4e4e4"/><rect x="217" y="27" width="90" height="16" fill="#f4f4f4"/><rect x="292" y="27" width="15" height="16" fill="#e4e4e4"/><path d="M295 33h8l-4 5z" fill="#000"/><rect x="357.500" y="27.500" width="14" height="14" fill="#fff" stroke="#ccc"/></svg>
<div class="t n" style="left:924px;top:328px">Source</div><div class="t n" style="left:1043px;top:328px">Parameter</div><div class="t n" style="left:1139px;top:328px">Operation</div><div class="t n" style="left:1234px;top:328px">Switch</div>
<div class="t n" style="left:924px;top:349px">SSystem state triggers</div><div class="t n" style="left:1043px;top:349px">Beat 1/2</div><div class="t n" style="left:1139px;top:349px">AND</div>
<!-- graph -->
<svg class="a" style="left:908px;top:436px;background:#000" width="292" height="119">
<path d="M4.500 15.500H291M4.500 15V104M40.500 15V104M77.500 15V104M113.500 15V104M148.500 15V104M185.500 15V104M221.500 15V104M257.500 15V104" stroke="#5ab0a8" fill="none" stroke-dasharray="1 2"/>
<path d="M4 60.500H292" stroke="#5fb0b0"/>
<path d="M4 105.500H231.500V15.500H240.500V105.500H287" stroke="#0c0" fill="none" stroke-width="1.200"/>
</svg>
<div class="a" style="left:1212px;top:436px;width:71px;height:120px;border:1px solid #aaa;box-sizing:border-box"></div>
<div class="btn" style="left:1295px;top:441px;width:52px;height:20px"><span>Presets</span></div>
<div class="btn" style="left:1295px;top:509px;width:52px;height:21px"><span>OK</span></div>
<div class="btn" style="left:1295px;top:535px;width:52px;height:21px"><span>Cancel</span></div>
<div class="a" style="left:665px;top:566px;width:691px;height:1px;background:#aaa"></div>
<div class="t s" style="left:665px;top:568px">Beat2</div>
</div></body></html>
